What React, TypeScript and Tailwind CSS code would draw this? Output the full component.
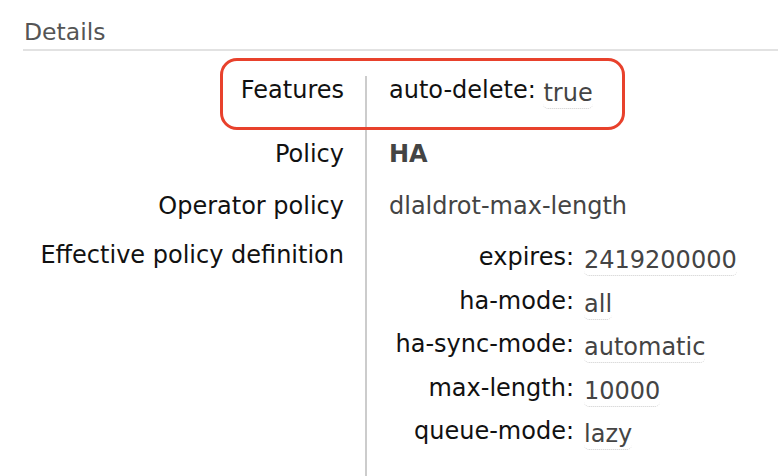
import React from "react";

const font = { fontFamily: '"DejaVu Sans", Verdana, sans-serif' };

interface Pair {
  k: string;
  v: string;
}

const effective: Pair[] = [
  { k: "expires", v: "2419200000" },
  { k: "ha-mode", v: "all" },
  { k: "ha-sync-mode", v: "automatic" },
  { k: "max-length", v: "10000" },
  { k: "queue-mode", v: "lazy" },
];

const Val: React.FC<{ children: React.ReactNode }> = ({ children }) => (
  <span className="relative top-[3px] text-[#444] border-b border-dotted border-[#ccc] rounded-[5px] pb-[1px]">
    {children}
  </span>
);

const Row: React.FC<{
  label: string;
  h: string;
  children: React.ReactNode;
  extra?: React.ReactNode;
}> = ({ label, h, children, extra }) => (
  <div className={`relative flex ${h}`}>
    {extra}
    <div className="w-[344px] shrink-0 text-right text-[#111]">{label}</div>
    <div className="w-[21px] shrink-0" />
    <div className="flex-1 border-l-2 border-[#ccc] pl-[22px]">{children}</div>
  </div>
);

export default function App() {
  return (
    <div
      className="w-[778px] h-[476px] overflow-hidden bg-white text-[24px] leading-[28px]"
      style={font}
    >
      <div className="ml-[23px] pt-[18px] pb-[3px] pl-[1px] border-b-2 border-[#e2e2e2] text-[#555] text-[23.5px]">
        Details
      </div>
      <div className="mt-[25px] flex flex-col">
        <Row
          label="Features"
          h="h-[64px]"
          extra={
            <div className="absolute left-[220px] top-[-18px] w-[405px] h-[72px] rounded-[17px] border-[3px] border-[#e8412c]" />
          }
        >
          <span className="text-[#111]">auto-delete:</span>{" "}
          <Val>true</Val>
        </Row>
        <Row label="Policy" h="h-[52px]">
          <span className="font-bold text-[#444]">HA</span>
        </Row>
        <Row label="Operator policy" h="h-[49px]">
          <span className="text-[#444]">dlaldrot-max-length</span>
        </Row>
        <Row label="Effective policy definition" h="h-[240px]">
          <div className="pt-[2px] flex flex-col">
            {effective.map((p) => (
              <div key={p.k} className="flex h-[43.5px]">
                <div className="w-[185px] shrink-0 text-right text-[#111]">
                  {p.k}:
                </div>
                <div className="pl-[10px]">
                  <Val>{p.v}</Val>
                </div>
              </div>
            ))}
          </div>
        </Row>
      </div>
    </div>
  );
}
